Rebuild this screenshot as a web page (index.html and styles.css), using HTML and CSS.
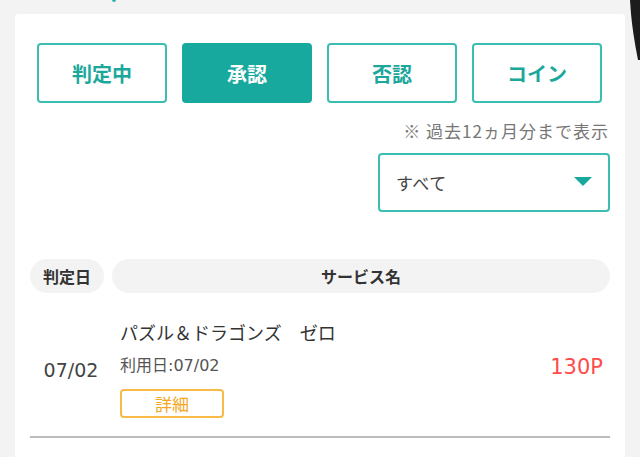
FILE: index.html
```html
<!DOCTYPE html>
<html lang="ja">
<head>
<meta charset="utf-8">
<link rel="stylesheet" href="styles.css">
</head>
<body>
<div class="dot"></div>
<svg class="edge" width="10" height="60" viewBox="0 0 10 60"><path d="M0 0 L10 0 L10 60 L8 60 Q3 35 1 14 Z" fill="#1c1c1c"/></svg>
<main class="card">
  <div class="tabs">
    <button class="tab">判定中</button>
    <button class="tab active">承認</button>
    <button class="tab">否認</button>
    <button class="tab">コイン</button>
  </div>
  <p class="note">※ 過去12ヵ月分まで表示</p>
  <div class="select">
    <span>すべて</span>
    <span class="caret"></span>
  </div>
  <div class="thead">
    <div class="pill pill-date">判定日</div>
    <div class="pill pill-name">サービス名</div>
  </div>
  <div class="row">
    <div class="date">07/02</div>
    <div class="info">
      <div class="title">パズル＆ドラゴンズ　ゼロ</div>
      <div class="used">利用日:07/02</div>
      <button class="detail">詳細</button>
    </div>
    <div class="points">130P</div>
  </div>
</main>
</body>
</html>
```
FILE: styles.css
```css
html, body {
  margin: 0;
  padding: 0;
}
body {
  background: #f3f3f3;
  font-family: "Noto Sans CJK JP", "Noto Sans", sans-serif;
  color: #333;
  width: 640px;
  height: 457px;
  overflow: hidden;
  position: relative;
}
.dot {
  position: absolute;
  left: 112px;
  top: -2px;
  width: 4px;
  height: 4px;
  border-radius: 50%;
  background: #2bb5a8;
}
.edge {
  position: absolute;
  right: 0;
  top: 0;
}
.card {
  margin: 14px 15px 0;
  background: #fff;
  border-radius: 4px 4px 0 0;
  padding: 29px 15px 0;
  height: 460px;
  box-sizing: border-box;
}
.tabs {
  display: grid;
  grid-template-columns: repeat(4, 130px);
  gap: 15px;
  margin: 0 7px;
}
.tab {
  height: 60px;
  border: 2px solid #3cbdb1;
  border-radius: 4px;
  background: #fff;
  color: #1ca79c;
  font-family: inherit;
  font-size: 20px;
  font-weight: 700;
  padding: 0;
}
.tab.active {
  background: #17a99e;
  border-color: #17a99e;
  color: #fff;
}
.note {
  margin: 17px 1px 0 0;
  text-align: right;
  font-size: 17px;
  letter-spacing: 1px;
  line-height: 22px;
  color: #777;
}
.select {
  margin: 11px 0 0 auto;
  width: 232px;
  height: 59px;
  box-sizing: border-box;
  border: 2px solid #3cbdb1;
  border-radius: 4px;
  display: flex;
  align-items: center;
  justify-content: space-between;
  padding: 0 16px 0 16px;
  font-size: 17px;
  letter-spacing: 0.5px;
  color: #444;
}
.caret {
  width: 0;
  height: 0;
  border-left: 9px solid transparent;
  border-right: 9px solid transparent;
  border-top: 9px solid #17a99e;
  margin-bottom: 3px;
}
.thead {
  display: flex;
  gap: 8px;
  margin-top: 47px;
}
.pill {
  height: 34px;
  border-radius: 17px;
  background: #f3f3f3;
  display: flex;
  align-items: center;
  justify-content: center;
  font-size: 16px;
  font-weight: 700;
  color: #333;
}
.pill-date {
  width: 74px;
}
.pill-name {
  flex: 1;
}
.row {
  display: flex;
  align-items: center;
  padding: 22px 7px 18px 0;
  border-bottom: 2px solid #bcbcbc;
}
.date {
  width: 82px;
  text-align: center;
  font-family: "DejaVu Sans", "Noto Sans CJK JP", sans-serif;
  font-size: 19px;
  color: #444;
  margin-top: 7px;
}
.info {
  flex: 1;
  padding-left: 8px;
}
.title {
  font-size: 18px;
  line-height: 34px;
  color: #333;
}
.used {
  margin-top: 5px;
  font-family: "DejaVu Sans", "Noto Sans CJK JP", sans-serif;
  font-size: 16px;
  line-height: 24px;
  color: #555;
}
.detail {
  margin-top: 11px;
  width: 104px;
  height: 29px;
  border: 2px solid #f8bb48;
  border-radius: 4px;
  background: #fff;
  color: #f5a623;
  font-family: inherit;
  font-size: 17px;
  line-height: 1;
  padding: 0;
  display: block;
}
.points {
  font-family: "DejaVu Sans", sans-serif;
  font-size: 21px;
  color: #ff4b4b;
}
```
